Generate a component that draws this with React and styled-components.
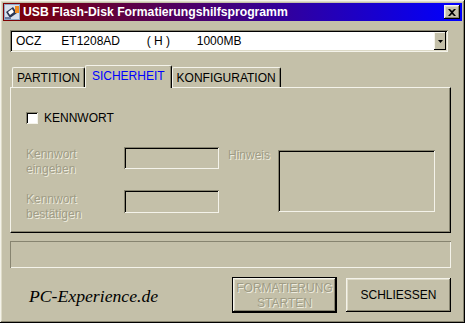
import React from "react";
import styled, { createGlobalStyle, css } from "styled-components";

const BG = "#c4c0a9";
const LIGHT = "#f4f3ea";
const SHADOW = "#878470";
const DARK = "#000000";

const GlobalStyle = createGlobalStyle`
  html, body {
    margin: 0;
    padding: 0;
    background: ${BG};
  }
  * { box-sizing: border-box; }
`;

const raised = css`
  box-shadow: inset -1px -1px ${DARK}, inset 1px 1px ${LIGHT},
    inset -2px -2px ${SHADOW}, inset 2px 2px #dedbc8;
`;

const sunken = css`
  box-shadow: inset 1px 1px ${SHADOW}, inset -1px -1px ${LIGHT},
    inset 2px 2px ${DARK}, inset -2px -2px #dcd9c6;
`;

const Window = styled.div`
  width: 465px;
  height: 323px;
  background: ${BG};
  padding: 3px;
  display: flex;
  flex-direction: column;
  font-family: "Liberation Sans", Arial, sans-serif;
  font-size: 12px;
  color: #000;
  ${raised};
`;

const TitleBar = styled.div`
  height: 18px;
  display: flex;
  align-items: center;
  padding: 0 2px 0 1px;
  background: linear-gradient(to right, #800000, #0000ff);
`;

const Title = styled.div`
  flex: 1;
  margin-left: 3px;
  color: #fff;
  font-weight: bold;
  font-size: 12.2px;
  white-space: nowrap;
`;

const CloseBtn = styled.div`
  width: 16px;
  height: 14px;
  background: ${BG};
  display: flex;
  align-items: center;
  justify-content: center;
  ${raised};
`;

const Body = styled.div`
  flex: 1;
  display: flex;
  flex-direction: column;
  padding: 9px 11px 0 7px;
`;

const Combo = styled.div`
  height: 22px;
  margin-right: 3px;
  background: #fff;
  display: flex;
  padding: 2px;
  ${sunken};
`;

const ComboText = styled.div`
  flex: 1;
  display: flex;
  align-items: center;
  padding-left: 4px;
  white-space: pre;
  font-size: 12px;
`;

const DropBtn = styled.div`
  width: 12px;
  background: ${BG};
  display: flex;
  align-items: center;
  justify-content: center;
  box-shadow: inset -1px -1px ${DARK}, inset 1px 1px ${LIGHT};
`;

const TabRow = styled.div`
  margin-top: 13px;
  height: 22px;
  display: flex;
  align-items: flex-end;
  padding-left: 2px;
  position: relative;
  z-index: 1;
`;

const Tab = styled.div`
  height: ${(p) => (p.$active ? "23px" : "20px")};
  margin: ${(p) => (p.$active ? "0 0 -1px 0" : "0")};
  padding: 0 ${(p) => (p.$active ? "6px" : "4px")};
  display: flex;
  align-items: center;
  padding-bottom: ${(p) => (p.$active ? "2px" : "0")};
  background: ${BG};
  color: ${(p) => (p.$active ? "#0000ff" : "#000")};
  border-top: 1px solid ${LIGHT};
  border-left: 1px solid ${LIGHT};
  border-right: 1px solid ${DARK};
  border-radius: 2px 2px 0 0;
  box-shadow: inset -1px 0 ${SHADOW};
  font-size: 12px;
  white-space: nowrap;
`;

const Panel = styled.div`
  height: 146px;
  background: ${BG};
  border-top: 1px solid ${LIGHT};
  border-left: 1px solid ${LIGHT};
  border-right: 1px solid ${DARK};
  border-bottom: 1px solid ${DARK};
  box-shadow: inset -1px -1px ${SHADOW};
  padding: 23px 15px 0;
`;

const CheckRow = styled.div`
  display: flex;
  align-items: center;
  gap: 6px;
  height: 13px;
`;

const CheckBox = styled.div`
  width: 12px;
  height: 12px;
  background: #fff;
  box-shadow: inset 1px 1px ${SHADOW}, inset -1px -1px ${LIGHT},
    inset 2px 2px ${DARK};
`;

const Fields = styled.div`
  margin-top: 23px;
  display: flex;
  align-items: flex-start;
`;

const FieldGrid = styled.div`
  display: grid;
  grid-template-columns: 98px 95px;
  row-gap: 13px;
  align-items: start;
`;

const Disabled = styled.div`
  color: #9f9c86;
  text-shadow: 1px 1px 0 #eeecdf;
  line-height: 15px;
  font-size: 12px;
  margin-top: ${(p) => p.$top || 0}px;
`;

const HintLabel = styled(Disabled)`
  width: 50px;
  margin-left: 9px;
  margin-top: 1px;
`;

const Field = styled.div`
  width: ${(p) => p.$w}px;
  height: ${(p) => p.$h}px;
  margin-top: ${(p) => p.$top || 0}px;
  box-shadow: inset 1px 1px ${SHADOW}, inset -1px -1px ${LIGHT},
    inset 2px 2px ${DARK};
`;

const StatusBox = styled.div`
  margin-top: 8px;
  height: 27px;
  box-shadow: inset 1px 1px ${SHADOW}, inset -1px -1px ${LIGHT};
`;

const Footer = styled.div`
  margin-top: 9px;
  display: flex;
  align-items: center;
  height: 36px;
`;

const Logo = styled.div`
  flex: 1;
  padding-left: 19px;
  padding-top: 2px;
  font-family: "Liberation Serif", "Times New Roman", serif;
  font-style: italic;
  font-size: 17.7px;
  color: #000;
`;

const Button = styled.div`
  width: 105px;
  height: ${(p) => (p.$default ? "36px" : "34px")};
  margin-left: ${(p) => (p.$default ? "0" : "9px")};
  background: ${BG};
  display: flex;
  align-items: center;
  justify-content: center;
  text-align: center;
  line-height: 15px;
  font-size: 12px;
  padding-top: 1px;
  border: ${(p) => (p.$default ? `1px solid ${DARK}` : "none")};
  color: ${(p) => (p.$disabled ? "#9f9c86" : "#000")};
  text-shadow: ${(p) => (p.$disabled ? "1px 1px 0 #eeecdf" : "none")};
  ${raised};
`;

function AppIcon() {
  return (
    <svg width="16" height="16" viewBox="0 0 16 16">
      <rect x="0" y="0" width="16" height="16" fill="#8fa8c8" />
      <rect x="1" y="1" width="14" height="14" fill="#d8e0ec" />
      <polygon points="2,8 9,3 13,9 6,14" fill="#2a3550" />
      <polygon points="4,8 8,5 10,8 6,11" fill="#ffffff" />
      <rect x="11" y="2" width="4" height="7" fill="#f08c20" />
      <rect x="1" y="13" width="6" height="2" fill="#6a7ca0" />
    </svg>
  );
}

export default function App() {
  return (
    <>
      <GlobalStyle />
      <Window>
        <TitleBar>
          <AppIcon />
          <Title>USB Flash-Disk Formatierungshilfsprogramm</Title>
          <CloseBtn>
            <svg width="8" height="7" viewBox="0 0 8 7">
              <path d="M0 0h2l2 2 2-2h2L5 3.5 8 7H6L4 5 2 7H0l3-3.5z" fill="#000" />
            </svg>
          </CloseBtn>
        </TitleBar>
        <Body>
          <Combo>
            <ComboText>{"OCZ      ET1208AD        ( H )        1000MB"}</ComboText>
            <DropBtn>
              <svg width="5" height="3" viewBox="0 0 5 3">
                <path d="M0 0h5L2.5 3z" fill="#000" />
              </svg>
            </DropBtn>
          </Combo>
          <TabRow>
            <Tab>PARTITION</Tab>
            <Tab $active>SICHERHEIT</Tab>
            <Tab>KONFIGURATION</Tab>
          </TabRow>
          <Panel>
            <CheckRow>
              <CheckBox />
              <span>KENNWORT</span>
            </CheckRow>
            <Fields>
              <FieldGrid>
                <Disabled>
                  Kennwort
                  <br />
                  eingeben
                </Disabled>
                <Field $w={95} $h={22} />
                <Disabled $top={2}>
                  Kennwort
                  <br />
                  bestätigen
                </Disabled>
                <Field $w={95} $h={23} />
              </FieldGrid>
              <HintLabel>Hinweis</HintLabel>
              <Field $w={158} $h={62} $top={3} />
            </Fields>
          </Panel>
          <StatusBox />
          <Footer>
            <Logo>PC-Experience.de</Logo>
            <Button $default $disabled>
              FORMATIERUNG
              <br />
              STARTEN
            </Button>
            <Button>SCHLIESSEN</Button>
          </Footer>
        </Body>
      </Window>
    </>
  );
}
